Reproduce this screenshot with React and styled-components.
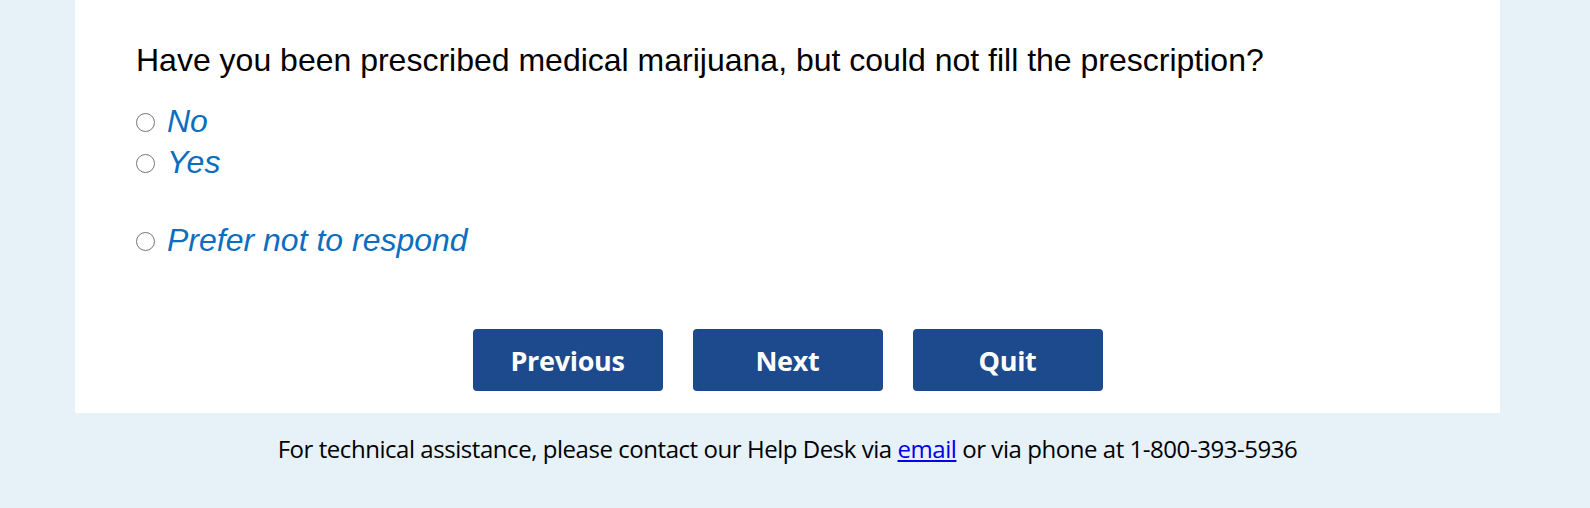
import React, { useState } from 'react';
import styled, { createGlobalStyle } from 'styled-components';

const GlobalStyle = createGlobalStyle`
  body {
    margin: 0;
    background: #e6f1f8;
    font-family: "Liberation Sans", Arial, sans-serif;
  }
`;

const Page = styled.div`
  width: 1425px;
  min-height: 508px;
  margin-left: 75px;
`;

const Panel = styled.main`
  background: #ffffff;
  padding: 42px 0 22px 61px;
  box-sizing: border-box;
`;

const Question = styled.h1`
  margin: 0;
  font-size: 32px;
  font-weight: normal;
  line-height: 36px;
  color: #000;
`;

const Options = styled.div`
  display: flex;
  flex-direction: column;
  margin-top: 23px;
`;

const OptionRow = styled.label`
  display: flex;
  align-items: center;
  gap: 12px;
  height: 41px;
  margin-top: ${props => (props.spaced ? '37px' : '0')};
  cursor: pointer;
`;

const Radio = styled.span`
  width: 19px;
  height: 19px;
  margin-top: 2px;
  border: 1.6px solid #767676;
  border-radius: 50%;
  box-sizing: border-box;
  display: flex;
  align-items: center;
  justify-content: center;
  &::after {
    content: "";
    width: 9px;
    height: 9px;
    border-radius: 50%;
    background: ${props => (props.checked ? '#0070c0' : 'transparent')};
  }
`;

const OptionText = styled.span`
  font-size: 32px;
  font-style: italic;
  color: #0b6ebf;
`;

const Buttons = styled.div`
  display: flex;
  justify-content: center;
  gap: 30px;
  margin-top: 68px;
  margin-left: -61px;
`;

const NavButton = styled.button`
  width: 190px;
  height: 62px;
  border: none;
  border-radius: 4px;
  background: #1d4a8c;
  color: #ffffff;
  font-family: "Open Sans", sans-serif;
  font-weight: bold;
  font-size: 27px;
  letter-spacing: -0.3px;
  padding-top: 2px;
  cursor: pointer;
`;

const Footer = styled.footer`
  text-align: center;
  padding-top: 21px;
  font-family: "Open Sans", sans-serif;
  font-size: 24px;
  line-height: 30px;
  color: #000;
  letter-spacing: -0.45px;
  a {
    color: #0000ee;
  }
`;

const choices = ['No', 'Yes', 'Prefer not to respond'];

function App() {
  const [answer, setAnswer] = useState(null);

  return (
    <Page>
      <GlobalStyle />
      <Panel>
        <Question>Have you been prescribed medical marijuana, but could not fill the prescription?</Question>
        <Options>
          {choices.map((c, i) => (
            <OptionRow key={c} spaced={i === 2} onClick={() => setAnswer(c)}>
              <Radio checked={answer === c} />
              <OptionText>{c}</OptionText>
            </OptionRow>
          ))}
        </Options>
        <Buttons>
          <NavButton>Previous</NavButton>
          <NavButton>Next</NavButton>
          <NavButton>Quit</NavButton>
        </Buttons>
      </Panel>
      <Footer>
        For technical assistance, please contact our Help Desk via <a href="#">email</a> or via phone at 1-800-393-5936
      </Footer>
    </Page>
  );
}

export default App;
